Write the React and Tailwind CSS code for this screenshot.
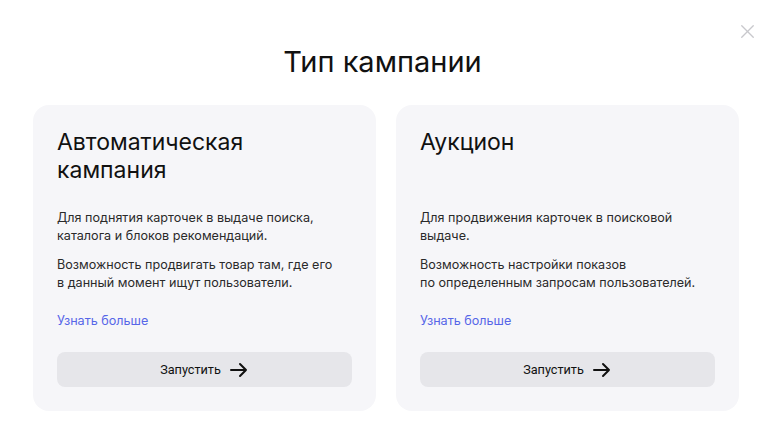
import { X } from "lucide-react";

const CARDS = [
  {
    title: ["Автоматическая", "кампания"],
    p1: ["Для поднятия карточек в выдаче поиска,", "каталога и блоков рекомендаций."],
    p2: ["Возможность продвигать товар там, где его", "в данный момент ищут пользователи."],
  },
  {
    title: ["Аукцион"],
    p1: ["Для продвижения карточек в поисковой", "выдаче."],
    p2: ["Возможность настройки показов", "по определенным запросам пользователей."],
  },
];

function Arrow() {
  return (
    <svg width="20" height="16" viewBox="0 0 20 16" fill="none" stroke="#111" strokeWidth="2" strokeLinecap="round" strokeLinejoin="round">
      <path d="M2 8h15M11 2l6 6-6 6" />
    </svg>
  );
}

export default function App() {
  return (
    <div
      className="relative w-[771px] h-[445px] bg-white overflow-hidden"
      style={{ fontFamily: "Inter, 'Noto Sans', sans-serif" }}
    >
      <button className="absolute right-[12px] top-[20px] text-[#c8c8cc]">
        <X size={23} strokeWidth={1.4} />
      </button>

      <h1 className="pt-[44px] pr-[6px] text-center text-[29px] leading-[36px] text-[#111]">Тип кампании</h1>

      <div className="flex gap-5 pl-[33px] pr-[32px] mt-[25px]">
        {CARDS.map((c, i) => (
          <div key={i} className="flex-1 rounded-[16px] bg-[#f6f6f9] px-6 pt-[23px] pb-6">
            <div className="min-h-[56px] text-[23px] leading-[28px] text-[#111]">
              {c.title.map((t) => (
                <div key={t}>{t}</div>
              ))}
            </div>
            <div className="mt-[25px] text-[12.6px] leading-[18px] text-[#2a2a2a]">
              {c.p1.map((t) => (
                <div key={t}>{t}</div>
              ))}
            </div>
            <div className="mt-[11px] text-[12.6px] leading-[18px] text-[#2a2a2a]">
              {c.p2.map((t) => (
                <div key={t}>{t}</div>
              ))}
            </div>
            <a className="block mt-[20px] text-[12.6px] leading-[18px] text-[#5766e8]">Узнать больше</a>
            <button className="mt-[22px] w-full h-[35px] rounded-[8px] bg-[#e6e6ea] flex items-center justify-center gap-2 text-[12.7px] text-[#111]">
              <span style={{ fontFamily: "Roboto, sans-serif" }}>Запустить</span>
              <Arrow />
            </button>
          </div>
        ))}
      </div>
    </div>
  );
}
